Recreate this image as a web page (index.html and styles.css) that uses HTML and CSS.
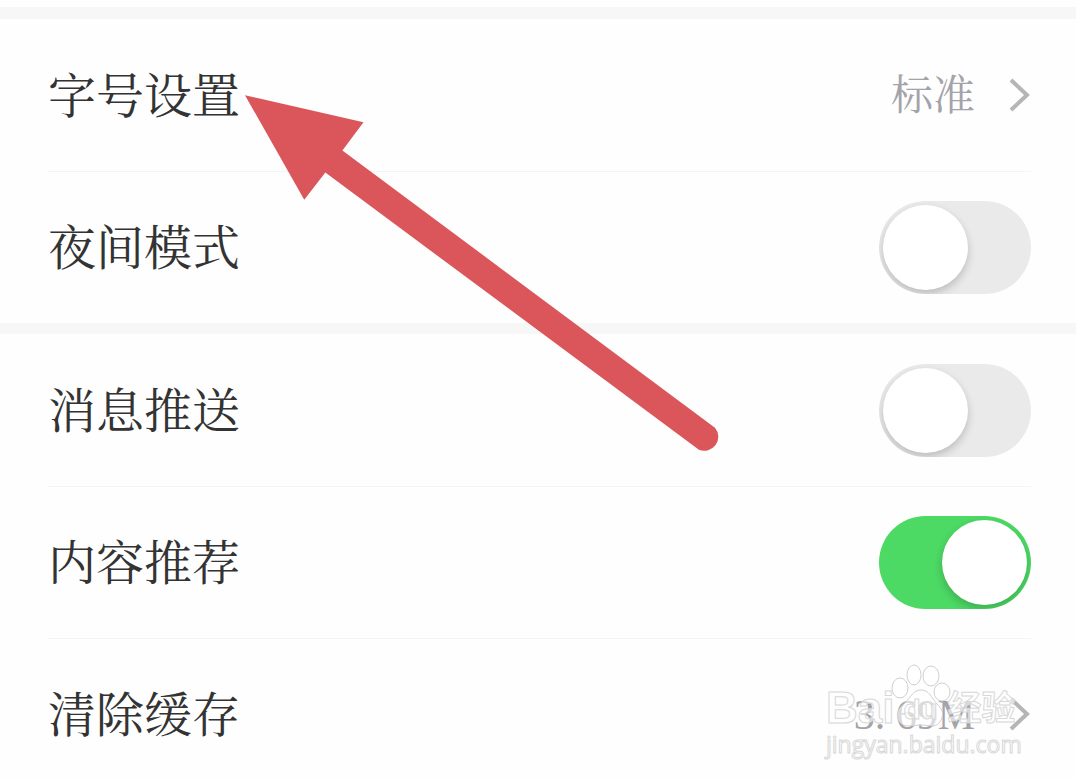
FILE: index.html
```html
<!DOCTYPE html>
<html lang="zh-CN">
<head>
    <meta charset="UTF-8">
    <meta name="viewport" content="width=device-width, initial-scale=1.0">
    <title>设置</title>
    <link rel="stylesheet" href="styles.css">
</head>
<body>
    <main class="settings">
        <section class="group">
            <button type="button" class="row">
                <span class="label">字号设置</span>
                <span class="value">标准</span>
                <svg class="chevron" viewBox="0 0 22 36" aria-hidden="true"><path d="M2 3 L18 18 L2 33"/></svg>
            </button>
            <div class="row">
                <label class="label" for="night">夜间模式</label>
                <input type="checkbox" class="switch" id="night">
            </div>
        </section>
        <section class="group">
            <div class="row">
                <label class="label" for="push">消息推送</label>
                <input type="checkbox" class="switch" id="push">
            </div>
            <div class="row">
                <label class="label" for="recommend">内容推荐</label>
                <input type="checkbox" class="switch" id="recommend" checked>
            </div>
            <button type="button" class="row">
                <span class="label">清除缓存</span>
                <span class="value">3. 69M</span>
                <svg class="chevron" viewBox="0 0 22 36" aria-hidden="true"><path d="M2 3 L18 18 L2 33"/></svg>
            </button>
        </section>

        <!-- pointer to the first row -->
        <svg class="arrow" viewBox="0 0 474 356" aria-hidden="true">
            <path d="M0 0 L118 27 L97 55 L468 331 A14 14 0 0 1 452 353 L80 77 L59 104 Z"/>
        </svg>

        <div class="watermark">
            <div class="brand">
                <span class="brand-name">Bai</span>
                <span class="paw">
                    <svg viewBox="0 0 60 66" aria-hidden="true">
                        <ellipse cx="9" cy="24" rx="8" ry="10"/>
                        <ellipse cx="23" cy="11" rx="7" ry="10"/>
                        <ellipse cx="40" cy="12" rx="8" ry="10"/>
                        <ellipse cx="51" cy="28" rx="8" ry="9"/>
                        <path d="M30 26 C38 26 40 33 46 40 C52 46 53 50 50 56 C46 65 38 61 30 61 C22 61 13 65 8 57 C4 49 8 44 14 39 C20 33 22 26 30 26 Z"/>
                    </svg>
                    <span class="du">du</span>
                </span>
                <span class="brand-cn">经验</span>
            </div>
            <div class="site">jingyan.baidu.com</div>
        </div>
    </main>
</body>
</html>
```

FILE: styles.css
```css
* {
    box-sizing: border-box;
}

body {
    margin: 0;
    overflow: hidden;
    background-color: #fefefe;
    color: #333;
    font-family: "Liberation Serif", "Noto Serif CJK SC", "Noto Sans CJK SC", serif;
}

.settings {
    position: relative;
    padding-top: 7px;
}

.group {
    border-top: 12px solid #f7f7f7;
}

.row {
    display: flex;
    align-items: center;
    position: relative;
    width: 100%;
    height: 152px;
    padding: 0 45px 0 48px;
    border: none;
    background: none;
    color: inherit;
    font-family: inherit;
    text-align: left;
}

.row + .row::before {
    content: '';
    position: absolute;
    top: 0;
    left: 48px;
    right: 45px;
    border-top: 1px solid #f4f4f4;
}

.group + .group {
    border-top-width: 11px;
}

.label {
    flex: 1;
    padding-top: 4px;
    font-size: 48px;
    font-weight: 400;
    line-height: 64px;
}

.value {
    padding-top: 2px;
    color: #a3a3a9;
    font-size: 42px;
    font-weight: 400;
    line-height: 64px;
}

.chevron {
    width: 22px;
    height: 36px;
    margin-left: 34px;
    fill: none;
    stroke: #b5b5b5;
    stroke-width: 4;
}

.switch {
    appearance: none;
    width: 152px;
    height: 93px;
    margin: 0;
    padding: 4px;
    border-radius: 47px;
    background-color: #eaeaea;
    overflow: hidden;
}

.switch::before {
    content: '';
    display: block;
    width: 85px;
    height: 85px;
    border-radius: 50%;
    background-color: #fff;
    box-shadow: 0 4px 8px rgba(0, 0, 0, 0.2);
}

.switch:checked {
    background-color: #4cd964;
}

.switch:checked::before {
    margin-left: auto;
}

.arrow {
    position: absolute;
    top: 95px;
    left: 245px;
    width: 476px;
    height: 358px;
    fill: #db565b;
    pointer-events: none;
}

.watermark {
    position: absolute;
    top: 664px;
    right: 54px;
    width: 196px;
    color: rgba(255, 255, 255, 0.6);
    font-family: "Liberation Sans", "Noto Sans CJK SC", sans-serif;
    -webkit-text-stroke: 1px #d8d8d8;
    pointer-events: none;
}

.brand {
    display: flex;
    align-items: flex-end;
    height: 66px;
}

.brand-name {
    font-size: 44px;
    font-weight: bold;
    line-height: 44px;
}

.paw {
    position: relative;
    flex: none;
    width: 56px;
    height: 66px;
    margin-left: -3px;
}

.paw svg {
    display: block;
    width: 60px;
    height: 66px;
    overflow: visible;
    fill: rgba(255, 255, 255, 0.6);
    stroke: #d0d0d0;
    stroke-width: 1;
}

.du {
    position: absolute;
    left: 12px;
    bottom: 4px;
    font-size: 28px;
    font-weight: bold;
    line-height: 32px;
}

.brand-cn {
    font-size: 34px;
    font-weight: bold;
    line-height: 44px;
}

.site {
    font-family: "Open Sans", sans-serif;
    font-size: 23px;
    line-height: 28px;
}
```
